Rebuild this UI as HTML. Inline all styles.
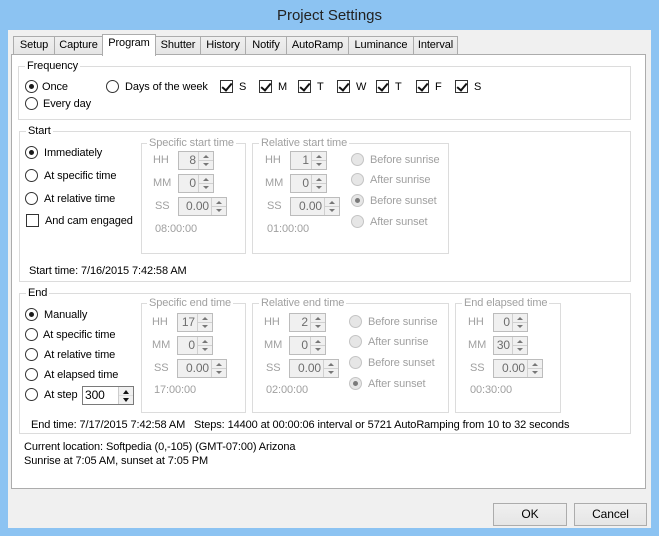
<!DOCTYPE html>
<html><head><meta charset="utf-8"><style>
*{box-sizing:border-box;margin:0;padding:0}
body{width:659px;height:536px;background:#8cc3f2;font-family:"Liberation Sans",sans-serif;font-size:11px;line-height:15px;letter-spacing:-0.1px;color:#000;position:relative;overflow:hidden}
.a{position:absolute;white-space:nowrap}
#title{left:0;width:659px;top:7px;text-align:center;font-size:15px;line-height:18px;letter-spacing:0;color:#222}
#client{left:8px;top:30px;width:643px;height:498px;background:#f0f0f0}
.tab{position:absolute;top:36px;height:19px;border:1px solid #acacac;border-bottom:none;background:linear-gradient(#f0f0f0,#e5e5e5);text-align:center;line-height:17px}
.tab.sel{top:34px;height:22px;background:#fff;z-index:3}
#panel{left:11px;top:54px;width:635px;height:435px;background:#fff;border:1px solid #acacac}
.g{position:absolute;border:1px solid #dcdcdc}
.gl{position:absolute;background:#fff;padding:0 2px;line-height:14px}
.dis{color:#a0a0a0}
.r{position:absolute;width:13px;height:13px;border:1px solid #333;border-radius:50%;background:#fff}
.r.on::after{content:"";position:absolute;left:3px;top:3px;width:5px;height:5px;border-radius:50%;background:#1a1a1a}
.r.d{border-color:#c4c4c4;background:#e6e6e6}
.r.d.on::after{background:#7a7a7a}
.c{position:absolute;width:13px;height:13px;border:1px solid #333;background:#fff}
.c.on::after{content:"";position:absolute;left:3px;top:0px;width:4px;height:8px;border:solid #111;border-width:0 2px 2px 0;transform:rotate(40deg)}
.sp{position:absolute;height:19px;border:1px solid #bcbcbc;background:#f0f0f0;color:#6d6d6d;text-align:right;line-height:17px;padding-right:17px;font-size:12px}
.sp::after{content:"";position:absolute;right:0;top:0;width:14px;height:17px;border-left:1px solid #d0d0d0;background:
linear-gradient(#d0d0d0,#d0d0d0) 0 8px/14px 1px no-repeat}
.sp i{position:absolute;right:4px;width:0;height:0;border-left:3px solid transparent;border-right:3px solid transparent;z-index:2}
.sp i.u{top:3px;border-bottom:3px solid #777}
.sp i.dn{top:11px;border-top:3px solid #777}
.btn{position:absolute;height:23px;border:1px solid #acacac;background:linear-gradient(#f0f0f0,#e5e5e5);text-align:center;line-height:21px;font-size:12px}
</style></head><body>
<div class="a" id="title">Project Settings</div>
<div class="a" id="client"></div>
<div class="tab" style="left:13px;width:42px">Setup</div>
<div class="tab" style="left:54px;width:49px">Capture</div>
<div class="tab sel" style="left:102px;width:54px">Program</div>
<div class="tab" style="left:155px;width:46px">Shutter</div>
<div class="tab" style="left:200px;width:46px">History</div>
<div class="tab" style="left:245px;width:42px">Notify</div>
<div class="tab" style="left:286px;width:63px">AutoRamp</div>
<div class="tab" style="left:348px;width:66px">Luminance</div>
<div class="tab" style="left:413px;width:45px">Interval</div>
<div class="a" id="panel"></div>

<!-- Frequency -->
<div class="g" style="left:18px;top:66px;width:613px;height:54px"></div>
<div class="gl" style="left:25px;top:59px">Frequency</div>
<div class="r on" style="left:25px;top:80px"></div><div class="a" style="left:42px;top:80px">Once</div>
<div class="r" style="left:25px;top:97px"></div><div class="a" style="left:43px;top:97px">Every day</div>
<div class="r" style="left:106px;top:80px"></div><div class="a" style="left:125px;top:80px">Days of the week</div>
<div class="c on" style="left:220px;top:80px"></div><div class="a" style="left:239px;top:80px">S</div>
<div class="c on" style="left:259px;top:80px"></div><div class="a" style="left:278px;top:80px">M</div>
<div class="c on" style="left:298px;top:80px"></div><div class="a" style="left:317px;top:80px">T</div>
<div class="c on" style="left:337px;top:80px"></div><div class="a" style="left:356px;top:80px">W</div>
<div class="c on" style="left:376px;top:80px"></div><div class="a" style="left:395px;top:80px">T</div>
<div class="c on" style="left:416px;top:80px"></div><div class="a" style="left:435px;top:80px">F</div>
<div class="c on" style="left:455px;top:80px"></div><div class="a" style="left:474px;top:80px">S</div>

<!-- Start -->
<div class="g" style="left:19px;top:131px;width:612px;height:151px"></div>
<div class="gl" style="left:26px;top:124px">Start</div>
<div class="r on" style="left:25px;top:146px"></div><div class="a" style="left:44px;top:146px">Immediately</div>
<div class="r" style="left:25px;top:169px"></div><div class="a" style="left:44px;top:169px">At specific time</div>
<div class="r" style="left:25px;top:192px"></div><div class="a" style="left:44px;top:192px">At relative time</div>
<div class="c" style="left:26px;top:214px"></div><div class="a" style="left:45px;top:214px">And cam engaged</div>
<div class="a" style="left:29px;top:264px">Start time: 7/16/2015 7:42:58 AM</div>

<div class="g" style="left:141px;top:143px;width:105px;height:111px"></div>
<div class="gl dis" style="left:147px;top:136px">Specific start time</div>
<div class="a dis" style="left:153px;top:153px">HH</div><div class="sp" style="left:178px;top:151px;width:36px">8<i class="u"></i><i class="dn"></i></div>
<div class="a dis" style="left:153px;top:176px">MM</div><div class="sp" style="left:178px;top:174px;width:36px">0<i class="u"></i><i class="dn"></i></div>
<div class="a dis" style="left:155px;top:199px">SS</div><div class="sp" style="left:178px;top:197px;width:49px">0.00<i class="u"></i><i class="dn"></i></div>
<div class="a dis" style="left:155px;top:222px">08:00:00</div>

<div class="g" style="left:252px;top:143px;width:197px;height:111px"></div>
<div class="gl dis" style="left:259px;top:136px">Relative start time</div>
<div class="a dis" style="left:265px;top:153px">HH</div><div class="sp" style="left:290px;top:151px;width:37px">1<i class="u"></i><i class="dn"></i></div>
<div class="a dis" style="left:265px;top:176px">MM</div><div class="sp" style="left:290px;top:174px;width:37px">0<i class="u"></i><i class="dn"></i></div>
<div class="a dis" style="left:267px;top:199px">SS</div><div class="sp" style="left:290px;top:197px;width:50px">0.00<i class="u"></i><i class="dn"></i></div>
<div class="a dis" style="left:267px;top:222px">01:00:00</div>
<div class="r d" style="left:351px;top:153px"></div><div class="a dis" style="left:370px;top:153px">Before sunrise</div>
<div class="r d" style="left:351px;top:173px"></div><div class="a dis" style="left:370px;top:173px">After sunrise</div>
<div class="r d on" style="left:351px;top:194px"></div><div class="a dis" style="left:370px;top:194px">Before sunset</div>
<div class="r d" style="left:351px;top:215px"></div><div class="a dis" style="left:370px;top:215px">After sunset</div>

<!-- End -->
<div class="g" style="left:19px;top:293px;width:612px;height:141px"></div>
<div class="gl" style="left:26px;top:286px">End</div>
<div class="r on" style="left:25px;top:308px"></div><div class="a" style="left:44px;top:308px">Manually</div>
<div class="r" style="left:25px;top:328px"></div><div class="a" style="left:43px;top:328px">At specific time</div>
<div class="r" style="left:25px;top:348px"></div><div class="a" style="left:44px;top:348px">At relative time</div>
<div class="r" style="left:25px;top:368px"></div><div class="a" style="left:44px;top:368px">At elapsed time</div>
<div class="r" style="left:25px;top:388px"></div><div class="a" style="left:44px;top:388px">At step</div>
<div class="a" style="left:82px;top:386px;width:52px;height:19px;border:1px solid #7a7a7a;background:#fff;padding-left:2px;line-height:17px;font-size:12px">300
<div class="a" style="right:0;top:0;width:15px;height:17px;border-left:1px solid #ccc;background:linear-gradient(#ddd,#ddd) 0 8px/15px 1px no-repeat,#f0f0f0"></div>
<i class="a" style="right:4px;top:3px;border-left:3px solid transparent;border-right:3px solid transparent;border-bottom:4px solid #111"></i>
<i class="a" style="right:4px;top:11px;border-left:3px solid transparent;border-right:3px solid transparent;border-top:4px solid #111"></i></div>
<div class="a" style="left:31px;top:418px">End time: 7/17/2015 7:42:58 AM&nbsp;&nbsp;&nbsp;Steps: 14400 at 00:00:06 interval or 5721 AutoRamping from 10 to 32 seconds</div>

<div class="g" style="left:141px;top:303px;width:105px;height:110px"></div>
<div class="gl dis" style="left:147px;top:296px">Specific end time</div>
<div class="a dis" style="left:152px;top:315px">HH</div><div class="sp" style="left:177px;top:313px;width:36px">17<i class="u"></i><i class="dn"></i></div>
<div class="a dis" style="left:152px;top:338px">MM</div><div class="sp" style="left:177px;top:336px;width:36px">0<i class="u"></i><i class="dn"></i></div>
<div class="a dis" style="left:154px;top:361px">SS</div><div class="sp" style="left:177px;top:359px;width:50px">0.00<i class="u"></i><i class="dn"></i></div>
<div class="a dis" style="left:154px;top:383px">17:00:00</div>

<div class="g" style="left:252px;top:303px;width:197px;height:110px"></div>
<div class="gl dis" style="left:259px;top:296px">Relative end time</div>
<div class="a dis" style="left:264px;top:315px">HH</div><div class="sp" style="left:289px;top:313px;width:37px">2<i class="u"></i><i class="dn"></i></div>
<div class="a dis" style="left:264px;top:338px">MM</div><div class="sp" style="left:289px;top:336px;width:37px">0<i class="u"></i><i class="dn"></i></div>
<div class="a dis" style="left:266px;top:361px">SS</div><div class="sp" style="left:289px;top:359px;width:50px">0.00<i class="u"></i><i class="dn"></i></div>
<div class="a dis" style="left:266px;top:383px">02:00:00</div>
<div class="r d" style="left:349px;top:315px"></div><div class="a dis" style="left:368px;top:315px">Before sunrise</div>
<div class="r d" style="left:349px;top:335px"></div><div class="a dis" style="left:368px;top:335px">After sunrise</div>
<div class="r d" style="left:349px;top:356px"></div><div class="a dis" style="left:368px;top:356px">Before sunset</div>
<div class="r d on" style="left:349px;top:377px"></div><div class="a dis" style="left:368px;top:377px">After sunset</div>

<div class="g" style="left:455px;top:303px;width:106px;height:110px"></div>
<div class="gl dis" style="left:462px;top:296px">End elapsed time</div>
<div class="a dis" style="left:468px;top:315px">HH</div><div class="sp" style="left:493px;top:313px;width:35px">0<i class="u"></i><i class="dn"></i></div>
<div class="a dis" style="left:468px;top:338px">MM</div><div class="sp" style="left:493px;top:336px;width:35px">30<i class="u"></i><i class="dn"></i></div>
<div class="a dis" style="left:470px;top:361px">SS</div><div class="sp" style="left:493px;top:359px;width:50px">0.00<i class="u"></i><i class="dn"></i></div>
<div class="a dis" style="left:470px;top:383px">00:30:00</div>

<div class="a" style="left:24px;top:440px">Current location: Softpedia (0,-105) (GMT-07:00) Arizona</div>
<div class="a" style="left:24px;top:454px">Sunrise at 7:05 AM, sunset at 7:05 PM</div>

<div class="btn" style="left:493px;top:503px;width:74px">OK</div>
<div class="btn" style="left:574px;top:503px;width:73px">Cancel</div>
</body></html>
